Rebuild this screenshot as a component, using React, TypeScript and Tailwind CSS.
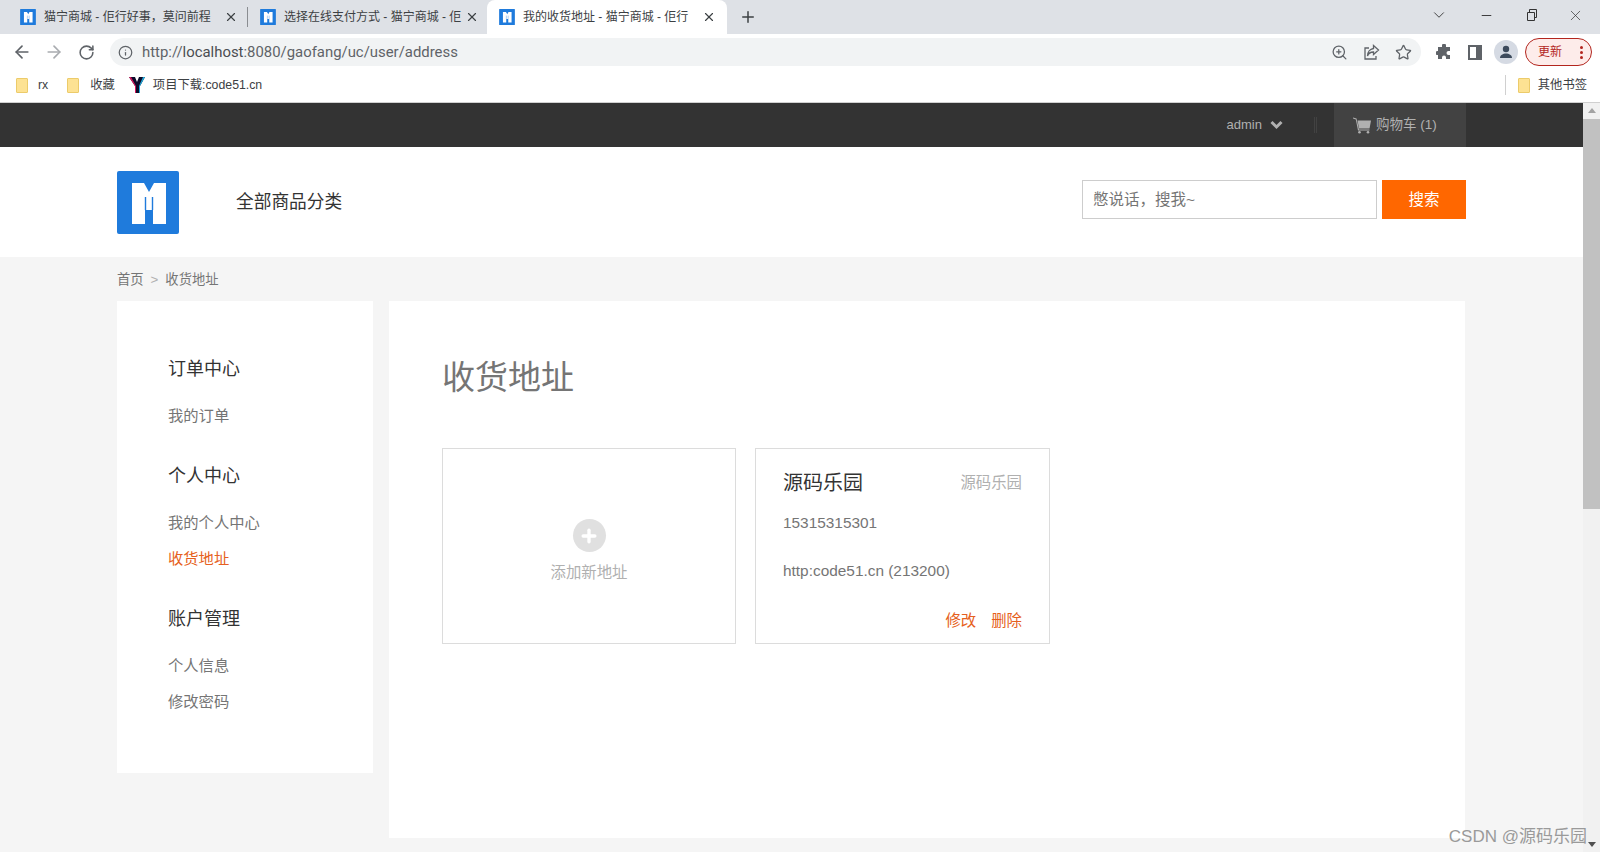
import { ArrowLeft, ArrowRight, ChevronDown, Info, Minus, Plus, RotateCw, Star, X, ZoomIn } from "lucide-react";

const cjk = "font-['Liberation_Sans','Noto_Sans_CJK_SC',sans-serif]";

function LogoMark({ width, height }: { width: number; height: number }) {
  return (
    <svg width={width} height={height} viewBox="0 0 62 63" className="shrink-0">
      <rect width="62" height="63" rx="2" fill="#1f7bdc" />
      <path d="M15 12H27L32 21L37 12H49V53H36V39H28V53H15Z" fill="#fff" />
      <path d="M28.5 26V39M35.5 26V39" stroke="#1f7bdc" strokeWidth="1.4" />
    </svg>
  );
}

function Folder() {
  return <div className="h-[15px] w-[12px] shrink-0 rounded-[1px] border border-[#eccb6a] bg-[#fde293]" />;
}

function Tab({ title, active, width }: { title: string; active?: boolean; width: string }) {
  return (
    <div className={`flex h-[34px] items-center ${width} ${active ? "rounded-t-lg bg-white pl-3 pr-[11px]" : "pl-3 pr-[9px]"}`}>
      <LogoMark width={16} height={16} />
      <span className="ml-2 flex-1 text-[12px] whitespace-nowrap text-[#3c4043]">{title}</span>
      <X size={14} strokeWidth={2} className="ml-1 shrink-0 text-[#3c4043]" />
    </div>
  );
}

function BrowserChrome() {
  return (
    <div className={`${cjk} shrink-0`}>
      <div className="flex h-[34px] items-end bg-[#dee1e6] pl-2">
        <Tab title="猫宁商城 - 佢行好事，莫问前程" width="w-[239px]" />
        <div className="mb-[7px] h-5 w-px bg-[#8a8d91]" />
        <Tab title="选择在线支付方式 - 猫宁商城 - 佢" width="w-[239px]" />
        <Tab title="我的收货地址 - 猫宁商城 - 佢行" width="w-[240px]" active />
        <Plus size={18} strokeWidth={2} className="mb-2 ml-3 text-[#3c4043]" />
        <div className="mb-[10px] ml-auto flex items-center pr-4 text-[#333]">
          <ChevronDown size={18} strokeWidth={1.2} className="mr-[31px]" />
          <Minus size={15} strokeWidth={1.5} className="mr-[32px]" />
          <svg width="12" height="12" viewBox="0 0 12 12" fill="none" stroke="#333" className="mr-[29px]">
            <path d="M1.5 3.5h7v8h-7zM3.5 3.5v-3h7v8h-2" />
          </svg>
          <X size={17} strokeWidth={1} />
        </div>
      </div>
      <div className="flex h-[34px] items-center bg-white pt-[2px] pl-3">
        <ArrowLeft size={20} strokeWidth={2} className="text-[#5f6368]" />
        <ArrowRight size={20} strokeWidth={2} className="ml-3 text-[#a9acb0]" />
        <RotateCw size={17} strokeWidth={2.2} className="ml-[14px] text-[#5f6368]" />
        <div className="ml-[15px] flex h-7 w-[1311px] items-center rounded-full bg-[#f1f3f4] pl-2">
          <Info size={15} strokeWidth={2} className="text-[#5f6368]" />
          <span className="ml-[9px] font-['Roboto',sans-serif] text-[14.9px] text-[#5f6368]">
            http://<span className="text-[#4a4d51]">localhost</span>:8080/gaofang/uc/user/address
          </span>
          <div className="ml-auto flex items-center gap-[15px] pr-[9px] text-[#5f6368]">
            <ZoomIn size={17} strokeWidth={1.8} />
            <svg width="17" height="17" viewBox="0 0 17 17" fill="none" stroke="#5f6368" strokeWidth="1.3">
              <path d="M6 4H2v11h11v-3" />
              <path d="M10.5 1.5l5 4.5-5 4.5V8c-3 0-5 1-6 4 0-4 2.500-7 6-7.500z" />
            </svg>
            <Star size={17} strokeWidth={1.8} />
          </div>
        </div>
        <svg width="16" height="16" viewBox="0 0 16 16" fill="#5f6368" className="ml-[15px]">
          <path d="M6 1.500a2 2 0 0 1 4 0V3h4v4h-1.500a2 2 0 0 0 0 4H14v4h-4v-1.500a2 2 0 0 0-4 0V15H2v-4h-.5a2 2 0 0 1 0-4H2V3h4z" />
        </svg>
        <div className="ml-4 h-[15px] w-[14px] border-2 border-r-[6px] border-[#5f6368]" />
        <div className="ml-[12px] flex h-6 w-6 items-center justify-center overflow-hidden rounded-full bg-[#d5dae3]">
          <svg width="16" height="16" viewBox="0 0 16 16" fill="#3c4a5c">
            <circle cx="8" cy="5" r="3.2" />
            <path d="M2 14c0-3 3-4.500 6-4.500s6 1.500 6 4.500z" />
          </svg>
        </div>
        <div className="ml-[7px] flex h-7 w-[67px] items-center justify-between rounded-full border border-[#b3261e] bg-[#fdecea] pl-3 pr-2">
          <span className="text-[12px] text-[#b3261e]">更新</span>
          <div className="flex flex-col gap-[2px]">
            <div className="h-[3px] w-[3px] rounded-full bg-[#b3261e]" />
            <div className="h-[3px] w-[3px] rounded-full bg-[#b3261e]" />
            <div className="h-[3px] w-[3px] rounded-full bg-[#b3261e]" />
          </div>
        </div>
      </div>
      <div className="flex h-[35px] items-center border-b border-[#d0d0d0] bg-white pl-4 text-[12.3px] text-[#3c4043]">
        <Folder />
        <span className="ml-[10px]">rx</span>
        <div className="ml-[19px]"><Folder /></div>
        <span className="ml-[11px]">收藏</span>
        <svg width="16" height="18" viewBox="0 0 16 18" className="ml-[14px]">
          <path d="M0 1h6l2 5 2-5h6l-5 9v7H6v-7z" fill="#0b0b2a" />
          <path d="M0 1h2l5 9v7H6v-7z" fill="#d4145a" />
          <path d="M14 1h2l-5 9v7h-1v-7z" fill="#20a8d8" />
        </svg>
        <span className="ml-2">项目下载:code51.cn</span>
        <div className="ml-auto flex items-center pr-[13px]">
          <div className="mr-3 h-5 w-px bg-[#d0d0d0]" />
          <Folder />
          <span className="ml-2">其他书签</span>
        </div>
      </div>
    </div>
  );
}

function TopBar() {
  return (
    <div className="h-11 bg-[#333]">
      <div className="mx-auto flex h-full w-[1349px] items-center justify-end text-[13px] text-[#b0b0b0]">
        <span>admin</span>
        <svg width="13" height="10" viewBox="0 0 13 10" fill="none" stroke="#b0b0b0" strokeWidth="3" className="ml-2">
          <path d="M1.500 2l5 5 5-5" />
        </svg>
        <div className="ml-[31px] h-4 w-[3px] border-x border-[#424242]" />
        <div className="ml-[17px] flex h-full w-[132px] items-center bg-[#424242] pl-[19px]">
          <svg width="18" height="18" viewBox="0 0 18 18" fill="#b0b0b0">
            <path d="M0 1.500l3.500 1L6 13.500h10.500v1H5L2.800 3.500 0 2.600z" />
            <path d="M4.500 4.500H18l-1.500 8H6z" />
            <circle cx="6.500" cy="16.300" r="1.300" />
            <circle cx="15" cy="16.300" r="1.300" />
          </svg>
          <span className="ml-[5px] text-[13.500px]">购物车 (1)</span>
        </div>
      </div>
    </div>
  );
}

function SiteHeader() {
  return (
    <div className="h-[110px] bg-white">
      <div className="mx-auto flex h-full w-[1349px] items-center">
        <LogoMark width={62} height={63} />
        <span className="ml-[57px] text-[17.700px] text-[#333]">全部商品分类</span>
        <div className="mb-[5px] ml-auto flex h-[39px]">
          <div className="flex w-[295px] items-center border border-[#cdcdcd] pl-[10px] text-[15.500px] text-[#757575]">憋说话，搜我~</div>
          <button className="ml-[5px] w-[84px] bg-[#ff6700] text-[15.500px] text-white">搜索</button>
        </div>
      </div>
    </div>
  );
}

function SideGroup({ title, items }: { title: string; items: { label: string; active?: boolean }[] }) {
  return (
    <div className="mb-[31px]">
      <div className="h-[30px] text-[18px] leading-[30px] text-[#333]">{title}</div>
      <div className="mt-[18px] flex flex-col gap-[8px]">
        {items.map((item) => (
          <div key={item.label} className={`h-7 text-[15.300px] leading-7 ${item.active ? "text-[#e65f20]" : "text-[#757575]"}`}>
            {item.label}
          </div>
        ))}
      </div>
    </div>
  );
}

function Sidebar() {
  return (
    <aside className="h-[472px] w-[256px] shrink-0 bg-white pt-[53px] pl-[51px]">
      <SideGroup title="订单中心" items={[{ label: "我的订单" }]} />
      <SideGroup title="个人中心" items={[{ label: "我的个人中心" }, { label: "收货地址", active: true }]} />
      <SideGroup title="账户管理" items={[{ label: "个人信息" }, { label: "修改密码" }]} />
    </aside>
  );
}

function AddressCards() {
  return (
    <div className="mt-[45px] flex gap-[19px]">
      <div className="flex h-[196px] w-[294px] flex-col items-center border border-[#dcdcdc] pt-[70px]">
        <div className="flex h-[33px] w-[33px] items-center justify-center rounded-full bg-[#e0e0e0]">
          <Plus size={20} strokeWidth={4} className="text-white" />
        </div>
        <div className="mt-[9px] text-[15.400px] text-[#b0b0b0]">添加新地址</div>
      </div>
      <div className="flex h-[196px] w-[295px] flex-col border border-[#dcdcdc] pt-[20px] pr-[27px] pl-[27px]">
        <div className="flex items-center justify-between">
          <span className="text-[20px] leading-[28px] text-[#333]">源码乐园</span>
          <span className="text-[15.400px] text-[#b0b0b0]">源码乐园</span>
        </div>
        <div className="mt-[15px] text-[15.400px] leading-[22px] text-[#757575]">15315315301</div>
        <div className="mt-[26px] text-[15.400px] leading-[22px] text-[#757575]">http:code51.cn (213200)</div>
        <div className="mt-[28px] flex justify-end gap-[15px] text-[15.400px] leading-[22px] text-[#e65f20]">
          <span>修改</span>
          <span>删除</span>
        </div>
      </div>
    </div>
  );
}

function Scrollbar() {
  return (
    <div className="flex w-[17px] shrink-0 flex-col items-center bg-[#f1f1f1]">
      <div className="mt-[5px] h-0 w-0 border-x-[4px] border-b-[5px] border-x-transparent border-b-[#a3a3a3]" />
      <div className="mt-[6px] h-[390px] w-full bg-[#c1c1c1]" />
      <div className="mt-auto mb-[5px] h-0 w-0 border-x-[4px] border-t-[5px] border-x-transparent border-t-[#505050]" />
    </div>
  );
}

export default function App() {
  return (
    <div className={`${cjk} relative flex h-[852px] w-[1600px] flex-col overflow-hidden bg-[#f5f5f5]`}>
      <BrowserChrome />
      <div className="flex min-h-0 flex-1">
        <div className="min-w-0 flex-1">
          <TopBar />
          <SiteHeader />
          <div className="mx-auto w-[1349px]">
            <div className="flex h-[44px] items-center pt-[2px] text-[13.300px] text-[#757575]">
              <span>首页</span>
              <span className="mx-[7px] text-[#b0b0b0]">&gt;</span>
              <span>收货地址</span>
            </div>
            <div className="flex gap-[16px]">
              <Sidebar />
              <main className="h-[537px] w-[1076px] bg-white pt-[52px] pl-[53px]">
                <h1 className="text-[33px] leading-[50px] font-normal text-[#757575]">收货地址</h1>
                <AddressCards />
              </main>
            </div>
          </div>
        </div>
        <Scrollbar />
      </div>
      <div className="absolute right-[13px] bottom-[3px] text-[17px] text-[#9a9a9a]">CSDN @源码乐园</div>
    </div>
  );
}
